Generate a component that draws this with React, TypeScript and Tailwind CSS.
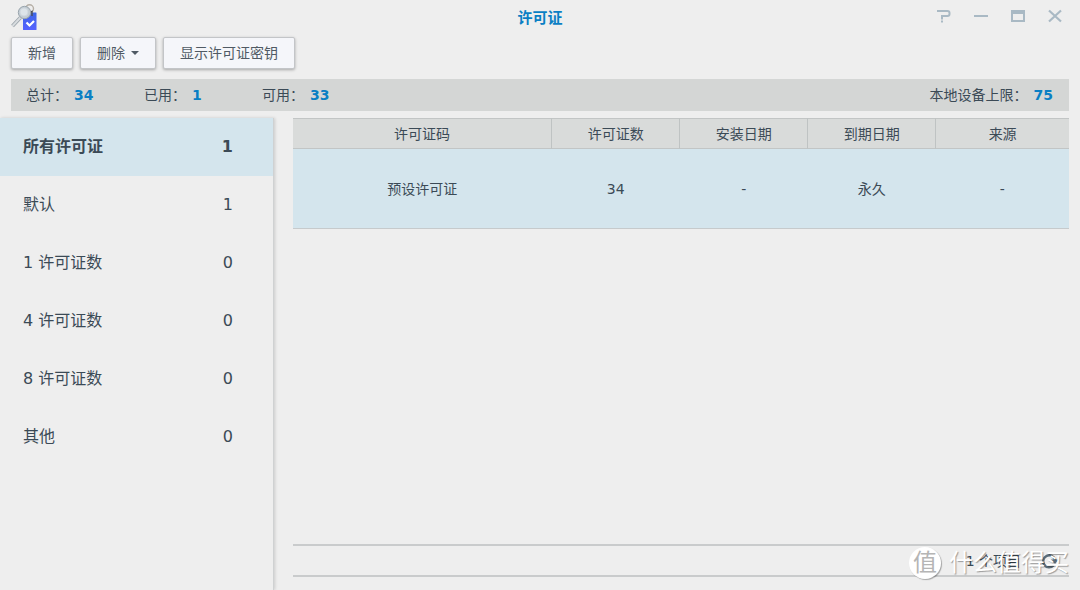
import { useState } from 'react';

const CATEGORIES = [
  { name: '所有许可证', count: 1 },
  { name: '默认', count: 1 },
  { name: '1 许可证数', count: 0 },
  { name: '4 许可证数', count: 0 },
  { name: '8 许可证数', count: 0 },
  { name: '其他', count: 0 },
];

const COLUMNS = ['许可证码', '许可证数', '安装日期', '到期日期', '来源'];

const LICENSES = [['预设许可证', '34', '-', '永久', '-']];

const BUTTON =
  'flex h-8 items-center rounded-xs border border-[#c3c5c8] bg-[#f5f6fa] px-4 text-sm text-[#505a64] shadow-[0_1px_3px_rgba(0,0,0,0.3)]';

function AppIcon() {
  return (
    <svg width="28" height="28" viewBox="0 0 28 28" aria-hidden="true">
      <defs>
        <linearGradient id="card" x1="0" y1="0" x2="0" y2="1">
          <stop offset="0" stopColor="#3d66e6" />
          <stop offset="1" stopColor="#5561ff" />
        </linearGradient>
      </defs>
      <rect x="12" y="8.5" width="13.5" height="17.5" rx="0.5" fill="url(#card)" />
      <path d="M15.5 18.5l3 3 4.5-4.5" fill="none" stroke="#fff" strokeWidth="2.2" />
      <circle cx="18.5" cy="4.8" r="4" fill="none" stroke="#b5aea5" strokeWidth="1.4" />
      <path d="M18 9l3-1.5V12" fill="none" stroke="#4a4d55" strokeWidth="1.4" />
      <path d="M9.5 13.5l-8 8.5" stroke="#98a1a8" strokeWidth="3.6" />
      <path d="M9.5 13.5l-8 8.5" stroke="#d8dcdf" strokeWidth="2" />
      <circle cx="13.5" cy="8.5" r="6.2" fill="#c3ccd3" stroke="#9aa5ad" strokeWidth="1" />
      <circle cx="13" cy="8" r="4" fill="#dde4e9" stroke="#cdd6dc" strokeWidth="0.8" />
    </svg>
  );
}

function WindowControls() {
  return (
    <div className="flex items-start justify-end gap-[23px] pt-[9px] text-[#a9b9c4]">
      <button type="button" aria-label="帮助">
        <svg width="14" height="14" viewBox="0 0 14 14" fill="none" stroke="currentColor" strokeWidth="2">
          <path d="M0 2h10.5Q12.5 2 12.5 4v1Q12.5 7 10.5 7H5v3.5M5 11.5v2" />
        </svg>
      </button>
      <button type="button" aria-label="最小化">
        <svg width="14" height="14" viewBox="0 0 14 14">
          <path d="M0 6h14v2H0z" fill="currentColor" />
        </svg>
      </button>
      <button type="button" aria-label="最大化">
        <svg width="14" height="14" viewBox="0 0 14 14">
          <path d="M0 1h14v12H0zM2 5v6h10V5z" fill="currentColor" fillRule="evenodd" />
        </svg>
      </button>
      <button type="button" aria-label="关闭">
        <svg width="14" height="14" viewBox="0 0 14 14" stroke="currentColor" strokeWidth="2.2">
          <path d="M1 1.5l12 11M13 1.5l-12 11" />
        </svg>
      </button>
    </div>
  );
}

function Stat({ label, value }: { label: string; value: number }) {
  return (
    <div className="flex min-w-[118px] items-center gap-1.5">
      <span>{label}：</span>
      <strong className="text-[#0a7fc4]">{value}</strong>
    </div>
  );
}

export default function App() {
  const [selected, setSelected] = useState(0);

  return (
    <div className="flex min-h-screen flex-col bg-[#eeeeee] font-['DejaVu_Sans','Noto_Sans_CJK_SC',sans-serif] text-sm text-[#3b4a56]">
      <header className="grid h-[37px] grid-cols-3 pr-[18px] pl-[11px]">
        <div className="pt-1">
          <AppIcon />
        </div>
        <h1 className="pl-[7px] text-center text-[15px] leading-[37px] font-bold text-[#0a7fc4]">
          许可证
        </h1>
        <WindowControls />
      </header>

      <div className="flex gap-[7px] px-[11px]">
        <button type="button" className={BUTTON}>
          新增
        </button>
        <button type="button" className={`${BUTTON} gap-1.5`}>
          删除
          <svg width="8" height="4" viewBox="0 0 8 4" aria-hidden="true">
            <path d="M0 0h8l-4 4z" fill="#505a64" />
          </svg>
        </button>
        <button type="button" className={BUTTON}>
          显示许可证密钥
        </button>
      </div>

      <div className="mx-[11px] mt-[10px] flex h-8 items-center bg-[#d4d6d5] pr-4 pl-[15px]">
        <Stat label="总计" value={34} />
        <Stat label="已用" value={1} />
        <Stat label="可用" value={33} />
        <div className="ml-auto">
          <Stat label="本地设备上限" value={75} />
        </div>
      </div>

      <div className="mt-[7px] flex flex-1">
        <nav className="w-[274px] shrink-0 border-r border-[#cfd1d2] shadow-[1px_0_3px_rgba(0,0,0,0.15)]">
          {CATEGORIES.map(({ name, count }, i) => (
            <button
              key={name}
              type="button"
              onClick={() => setSelected(i)}
              className={`flex h-[58px] w-full items-center justify-between pr-10 pl-[23px] text-base ${
                i === selected ? 'bg-[#d4e5ed] font-bold' : ''
              }`}
            >
              <span>{name}</span>
              <span>{count}</span>
            </button>
          ))}
        </nav>

        <main className="mr-[11px] ml-[19px] flex flex-1 flex-col">
          <table className="w-full table-fixed border-collapse text-center">
            <colgroup>
              <col className="w-1/3" />
              <col className="w-[16.5%]" />
              <col className="w-[16.5%]" />
              <col className="w-[16.5%]" />
              <col />
            </colgroup>
            <thead>
              <tr className="h-[30px] border-y border-[#c2c5c5] bg-[#d9dbda]">
                {COLUMNS.map((column) => (
                  <th
                    key={column}
                    className="border-l border-[#bfc3c3] font-normal first:border-l-0"
                  >
                    {column}
                  </th>
                ))}
              </tr>
            </thead>
            <tbody>
              {LICENSES.map((cells) => (
                <tr key={cells[0]} className="h-20 border-b border-[#c6cacc] bg-[#d4e5ed]">
                  {cells.map((cell, i) => (
                    <td key={i}>{cell}</td>
                  ))}
                </tr>
              ))}
            </tbody>
          </table>

          <footer className="relative mt-auto mb-[13px] flex h-[33px] items-center justify-end gap-5 border-y-2 border-[#c9cbcc] pr-[10px]">
            <span>1 个项目</span>
            <button type="button" aria-label="刷新">
              <svg width="18" height="16" viewBox="0 0 18 16" fill="none">
                <path d="M12.5 12.5A6 6 0 1 1 14 7" stroke="#5b6c79" strokeWidth="2.5" />
                <path d="M10 6.5h8l-4 4.5z" fill="#5b6c79" />
              </svg>
            </button>
            {/* site watermark, lies over the pager */}
            <div className="pointer-events-none absolute top-0 right-0 flex h-[33px] items-center gap-2 text-2xl leading-none whitespace-nowrap text-white">
              <span className="flex size-8 items-center justify-center rounded-full bg-white text-[#b5b5b5] shadow-[1px_1px_1px_rgba(0,0,0,0.3)]">
                值
              </span>
              <span className="[text-shadow:1px_1px_1px_rgba(0,0,0,0.35)]">什么值得买</span>
            </div>
          </footer>
        </main>
      </div>
    </div>
  );
}
